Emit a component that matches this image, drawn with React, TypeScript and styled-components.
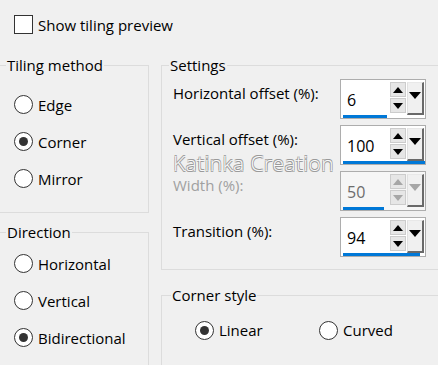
import styled, { createGlobalStyle } from 'styled-components'

const GlobalStyle = createGlobalStyle`
  html, body {
    margin: 0;
    padding: 0;
    background: #f0f0f0;
  }
  body {
    font-family: "Open Sans", "Noto Sans", sans-serif;
  }
`

type SpinRow = { label: string; value: string; fill: number; disabled?: boolean }

const spinRows: SpinRow[] = [
  { label: 'Horizontal offset (%):', value: '6', fill: 44 },
  { label: 'Vertical offset (%):', value: '100', fill: 82 },
  { label: 'Width (%):', value: '50', fill: 41, disabled: true },
  { label: 'Transition (%):', value: '94', fill: 77 },
]

const UpArrow = ({ color }: { color: string }) => (
  <svg width="10" height="6" viewBox="0 0 10 6">
    <polygon points="0,6 10,6 5,0" fill={color} />
  </svg>
)

const DownArrow = ({ color, w = 10, h = 6 }: { color: string; w?: number; h?: number }) => (
  <svg width={w} height={h} viewBox={`0 0 ${w} ${h}`}>
    <polygon points={`0,0 ${w},0 ${w / 2},${h}`} fill={color} />
  </svg>
)

const Radio = ({ checked, label }: { checked?: boolean; label: string }) => (
  <SRadioRow>
    <SRadioCircle>{checked && <SRadioDot />}</SRadioCircle>
    <span>{label}</span>
  </SRadioRow>
)

const SpinBox = ({ row }: { row: SpinRow }) => {
  const arrow = row.disabled ? '#a6a6a6' : '#000'
  return (
    <SSpin $disabled={row.disabled}>
      <SSpinTop>
        <SSpinValue>{row.value}</SSpinValue>
        <SArrows>
          <SArrowBtn><UpArrow color={arrow} /></SArrowBtn>
          <SArrowBtn><DownArrow color={arrow} /></SArrowBtn>
        </SArrows>
        <SDropBtn><DownArrow color={arrow} w={12} h={7} /></SDropBtn>
      </SSpinTop>
      <SBar style={{ width: row.fill }} />
    </SSpin>
  )
}

export default function App() {
  return (
    <>
      <GlobalStyle />
      <SWindow>
        <SCheckRow>
          <SCheckBox />
          <span>Show tiling preview</span>
        </SCheckRow>
        <SColumns>
          <SLeftCol>
            <SGroup>
              <SLegend>Tiling method</SLegend>
              <SGroupBody $pad="11px 0 15px 15px">
                <Radio label="Edge" />
                <Radio label="Corner" checked />
                <Radio label="Mirror" />
              </SGroupBody>
            </SGroup>
            <SGroup>
              <SLegend>Direction</SLegend>
              <SGroupBody $pad="3px 0 20px 15px">
                <Radio label="Horizontal" />
                <Radio label="Vertical" />
                <Radio label="Bidirectional" checked />
              </SGroupBody>
            </SGroup>
          </SLeftCol>
          <SRightCol>
            <SGroup>
              <SLegend>Settings</SLegend>
              <SGroupBody $pad="4px 0 12px 11px">
                <SSettingsList>
                  {spinRows.map((row) => (
                    <SSettingRow key={row.label}>
                      <SLabel $disabled={row.disabled}>{row.label}</SLabel>
                      <SpinBox row={row} />
                    </SSettingRow>
                  ))}
                </SSettingsList>
              </SGroupBody>
              <SWatermark>Katinka Creation</SWatermark>
            </SGroup>
            <SGroup>
              <SLegend $offset={9}>Corner style</SLegend>
              <SGroupBody $pad="15px 0 30px 33px">
                <SInlineRadios>
                  <Radio label="Linear" checked />
                  <Radio label="Curved" />
                </SInlineRadios>
              </SGroupBody>
            </SGroup>
          </SRightCol>
        </SColumns>
      </SWindow>
    </>
  )
}

const SWindow = styled.div`
  width: 438px;
  height: 365px;
  overflow: hidden;
  background: #f0f0f0;
  color: #000;
  font-size: 15px;
`

const SCheckRow = styled.div`
  display: flex;
  align-items: center;
  gap: 5px;
  height: 19px;
  padding: 15px 0 0 14px;
`

const SCheckBox = styled.div`
  box-sizing: border-box;
  width: 19px;
  height: 19px;
  border: 1px solid #333;
  background: #fff;
`

const SColumns = styled.div`
  display: grid;
  grid-template-columns: 151px 300px;
  column-gap: 12px;
  margin: 21px 0 0 -2px;
  align-items: start;
`

const SLeftCol = styled.div`
  display: flex;
  flex-direction: column;
  gap: 9px;
`

const SRightCol = styled.div`
  display: flex;
  flex-direction: column;
  gap: 15px;
`

const SGroup = styled.fieldset`
  position: relative;
  margin: 0;
  padding: 0;
  min-width: 0;
  border: 1px solid #dcdcdc;
`

const SGroupBody = styled.div<{ $pad: string }>`
  padding: ${(p) => p.$pad};
`

const SLegend = styled.legend<{ $offset?: number }>`
  margin-left: ${(p) => p.$offset ?? 7}px;
  padding: 0 1px;
  line-height: 20px;
  height: 20px;
`

const SRadioRow = styled.div`
  display: flex;
  align-items: center;
  gap: 5px;
  height: 37px;
`

const SRadioCircle = styled.div`
  box-sizing: border-box;
  width: 19px;
  height: 19px;
  border-radius: 50%;
  border: 1px solid #333;
  background: #fff;
  display: flex;
  align-items: center;
  justify-content: center;
`

const SRadioDot = styled.div`
  width: 9px;
  height: 9px;
  border-radius: 50%;
  background: #333;
`

const SInlineRadios = styled.div`
  display: grid;
  grid-template-columns: 124px auto;
  & > div {
    height: 20px;
  }
`

const SSettingsList = styled.div`
  display: flex;
  flex-direction: column;
  gap: 6px;
`

const SSettingRow = styled.div`
  display: grid;
  grid-template-columns: 167px 86px;
  align-items: start;
`

const SLabel = styled.span<{ $disabled?: boolean }>`
  color: ${(p) => (p.$disabled ? '#a0a0a0' : '#000')};
  line-height: 20px;
  padding-top: 4px;
`

const SSpin = styled.div<{ $disabled?: boolean }>`
  box-sizing: border-box;
  width: 86px;
  height: 40px;
  border: 1px solid #adadad;
  background: ${(p) => (p.$disabled ? '#f6f6f6' : '#fff')};
  color: ${(p) => (p.$disabled ? '#6d6d6d' : '#000')};
  padding: 2px 1px 0 1px;
  display: flex;
  flex-direction: column;
`

const SSpinTop = styled.div`
  display: flex;
  height: 33px;
`

const SSpinValue = styled.div`
  flex: 1;
  display: flex;
  align-items: center;
  padding: 2px 0 0 5px;
  font-size: 16px;
`

const SArrows = styled.div`
  display: flex;
  flex-direction: column;
  width: 16px;
  margin-right: 1px;
`

const SArrowBtn = styled.div`
  box-sizing: border-box;
  height: 15px;
  border: 1px solid #cccccc;
  background: #e6e6e6;
  display: flex;
  align-items: center;
  justify-content: center;
  & + & {
    margin-top: 1px;
  }
`

const SDropBtn = styled.div`
  box-sizing: border-box;
  width: 17px;
  height: 33px;
  background: #f0f0f0;
  border-left: 1px solid #e0e0e0;
  border-top: 1px solid #e8e8e8;
  border-right: 2px solid #696969;
  border-bottom: 2px solid #696969;
  display: flex;
  align-items: center;
  justify-content: center;
  padding-bottom: 6px;
`

const SBar = styled.div`
  height: 3px;
  margin-left: 1px;
  background: #0078d7;
`

const SWatermark = styled.div`
  position: absolute;
  left: 11px;
  top: 74px;
  font-size: 21px;
  font-weight: 300;
  letter-spacing: 0.4px;
  color: #fbfbfb;
  text-shadow:
    -0.6px -0.6px 0 #9a9a9a,
    0.6px -0.6px 0 #9a9a9a,
    -0.6px 0.6px 0 #9a9a9a,
    0.6px 0.6px 0 #9a9a9a;
  pointer-events: none;
`
